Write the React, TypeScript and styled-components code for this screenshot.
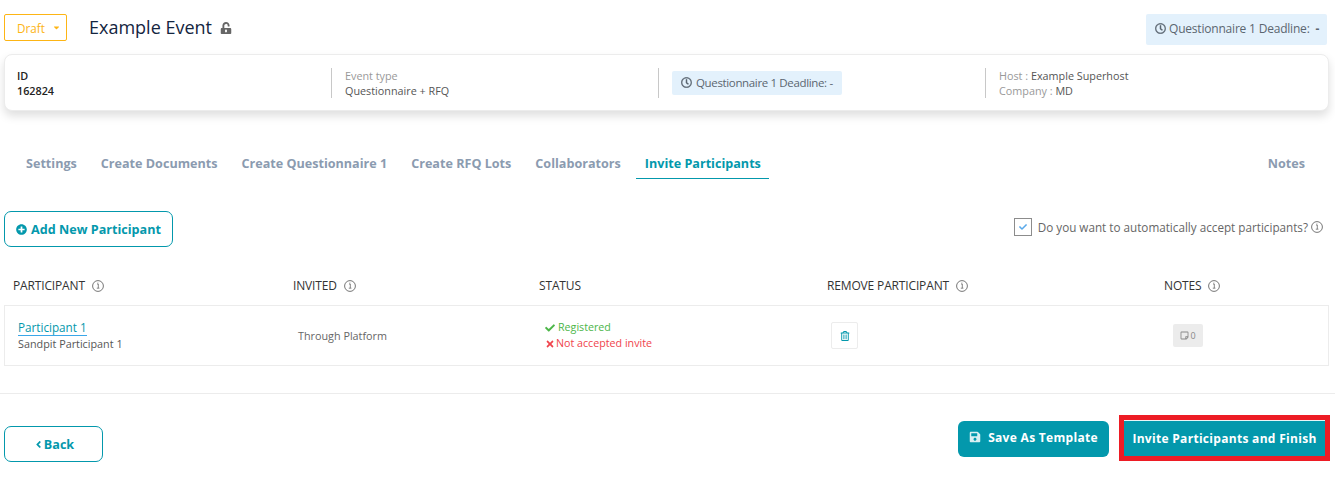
import styled, { createGlobalStyle } from 'styled-components';
import {
  FaAngleLeft,
  FaCaretDown,
  FaCheck,
  FaPlusCircle,
  FaRegClock,
  FaRegStickyNote,
  FaRegTrashAlt,
  FaSave,
  FaTimes,
  FaUnlockAlt
} from 'react-icons/fa';

const TEAL = '#0398ac';

const GlobalStyle = createGlobalStyle`
  html, body {
    margin: 0;
    padding: 0;
    background: #fff;
    font-family: "Open Sans", "Liberation Sans", sans-serif;
    color: #555;
    overflow: hidden;
  }
  * { box-sizing: border-box; }
`;

const Page = styled.div`
  width: 1335px;
  height: 477px;
  padding-top: 14px;
`;

const Header = styled.div`
  display: flex;
  align-items: flex-start;
  height: 31px;
  padding: 0 8px 0 4px;
`;

const StatusButton = styled.div`
  width: 63px;
  height: 27px;
  display: flex;
  align-items: center;
  gap: 7px;
  padding-left: 12px;
  border: 1px solid #fdb515;
  border-radius: 2px;
  color: #fdb515;
  font-size: 11.7px;
  svg { font-size: 9px; }
`;

const EventTitle = styled.div`
  display: flex;
  align-items: center;
  gap: 8px;
  height: 25px;
  margin-left: 22px;
  font-size: 18px;
  color: #14253f;
  svg { font-size: 12px; color: #666; margin-top: 2px; }
`;

const DeadlineChip = styled.div<{ $inCard?: boolean }>`
  display: flex;
  align-items: center;
  background: #e3f1fc;
  border-radius: 2px;
  color: #5b6670;
  ${props => props.$inCard ? `
    width: 170px;
    height: 24px;
    padding-left: 9px;
    gap: 4px;
    font-size: 11.5px;
    letter-spacing: -0.35px;
  ` : `
    width: 181px;
    height: 31px;
    padding: 0 0 2px 9px;
    gap: 3px;
    margin-left: auto;
    font-size: 12px;
    letter-spacing: -0.2px;
  `}
  svg { font-size: 11px; flex: none; stroke: currentColor; stroke-width: 12px; }
  b { font-weight: 700; margin-left: 3px; }
`;

const InfoCard = styled.div`
  display: grid;
  grid-template-columns: 326px repeat(3, 327px);
  align-items: center;
  width: 1325px;
  height: 57px;
  margin: 9px 0 0 4px;
  border: 1px solid #ececec;
  border-radius: 8px;
  background: #fff;
  box-shadow: 0 5px 10px rgba(0, 0, 0, 0.13);
`;

const InfoCell = styled.div<{ $first?: boolean }>`
  height: 30px;
  padding-left: 13px;
  display: flex;
  flex-direction: column;
  justify-content: center;
  font-size: 10.8px;
  line-height: 15px;
  color: #555;
  ${props => !props.$first && `border-left: 1px solid #c8c8c8;`}
  ${props => props.$first && `font-weight: 600; color: #222; padding-left: 12px;`}
`;

const Muted = styled.span`
  color: #999;
`;

const Tabs = styled.div`
  display: flex;
  align-items: flex-start;
  height: 40px;
  margin-top: 32px;
  padding: 0 30px 0 17px;
`;

const Tab = styled.div<{ $active?: boolean; $right?: boolean }>`
  height: 36px;
  padding: 12px 9px 0;
  margin-right: 6px;
  font-size: 12.6px;
  font-weight: 700;
  line-height: 18px;
  white-space: nowrap;
  color: ${props => (props.$active ? TEAL : '#8b9bb0')};
  ${props => props.$active && `border-bottom: 1px solid ${TEAL}; padding-right: 8px;`}
  ${props => props.$right && `margin: 0 0 0 auto; padding-right: 0;`}
`;

const ActionRow = styled.div`
  display: flex;
  align-items: flex-start;
  justify-content: space-between;
  height: 36px;
  margin-top: 28px;
  padding: 0 12px 0 4px;
`;

const OutlineButton = styled.div<{ $width: number; $gap: number }>`
  display: flex;
  align-items: center;
  justify-content: center;
  gap: ${props => props.$gap}px;
  width: ${props => props.$width}px;
  height: 36px;
  border: 1px solid ${TEAL};
  border-radius: 7px;
  color: ${TEAL};
  font-size: 12.6px;
  font-weight: 700;
  svg { font-size: 11px; }
`;

const AcceptLabel = styled.label`
  display: flex;
  align-items: center;
  gap: 6px;
  height: 18px;
  margin-top: 7px;
  font-size: 11.7px;
  color: #666;
`;

const CheckBox = styled.span`
  width: 18px;
  height: 18px;
  display: flex;
  align-items: center;
  justify-content: center;
  border: 1px solid #8c8c8c;
  color: #5aa9ea;
  svg { font-size: 8px; }
`;

const AcceptInfo = styled.span`
  display: flex;
  margin-left: -3px;
`;

const Columns = styled.div`
  display: grid;
  grid-template-columns: 280px 246px 288px 337px 1fr;
`;

const TableHead = styled(Columns)`
  height: 39px;
  margin-top: 19px;
  padding-left: 13px;
  align-items: center;
`;

const HeadCell = styled.div`
  display: flex;
  align-items: center;
  gap: 7px;
  font-size: 12px;
  letter-spacing: -0.15px;
  color: #333;
  svg { margin-top: 1px; }
`;

const Row = styled(Columns)`
  width: 1325px;
  height: 61px;
  margin-left: 4px;
  padding-left: 9px;
  border: 1px solid #ececec;
  align-items: center;
`;

const NameCell = styled.div`
  display: flex;
  flex-direction: column;
  align-items: flex-start;
  padding-left: 4px;
  font-size: 10.8px;
  line-height: 15px;
  color: #555;
`;

const NameLink = styled.a`
  font-size: 11.7px;
  line-height: 15px;
  color: ${TEAL};
  border-bottom: 1px solid #3aa7e8;
`;

const PlainCell = styled.div`
  padding-left: 4px;
  font-size: 10.8px;
  color: #666;
`;

const StatusCell = styled.div`
  display: flex;
  flex-direction: column;
  gap: 1px;
  padding-left: 5px;
  font-size: 10.7px;
  line-height: 15px;
`;

const StatusLine = styled.div<{ $color: string; $gap: number }>`
  display: flex;
  align-items: center;
  gap: ${props => props.$gap}px;
  color: ${props => props.$color};
  svg { font-size: 10px; }
`;

const TrashButton = styled.div`
  width: 27px;
  height: 27px;
  margin-left: 3px;
  display: flex;
  align-items: center;
  justify-content: center;
  border: 1px solid #ececec;
  border-radius: 2px;
  color: ${TEAL};
  font-size: 10px;
`;

const NoteBadge = styled.div`
  display: flex;
  align-items: center;
  justify-content: center;
  gap: 1px;
  width: 30px;
  height: 23px;
  margin-left: 8px;
  background: #ececec;
  border-radius: 2px;
  color: #888;
  font-size: 9px;
  svg { font-size: 9px; }
`;

const Divider = styled.hr`
  height: 1px;
  margin: 27px 0 0;
  border: 0;
  background: #ececec;
`;

const Footer = styled.div`
  display: flex;
  align-items: flex-start;
  margin-top: 21px;
  padding: 0 5px 0 4px;
`;

const BackSlot = styled.div`
  margin-top: 11px;
  margin-right: auto;
`;

const SaveButton = styled.div`
  display: flex;
  align-items: center;
  justify-content: center;
  gap: 7px;
  width: 151px;
  height: 36px;
  padding-bottom: 4px;
  margin-top: 6px;
  margin-right: 10px;
  background: ${TEAL};
  border-radius: 6px;
  color: #fff;
  font-size: 12px;
  font-weight: 700;
  letter-spacing: 0.3px;
  svg { font-size: 12px; opacity: 0.85; }
`;

const FinishButton = styled.div`
  display: flex;
  align-items: center;
  justify-content: center;
  width: 211px;
  height: 46px;
  background: ${TEAL};
  border: 5px solid #ed1c24;
  box-shadow: inset 0 1px 0 #e8f5f7;
  color: #fff;
  font-size: 12px;
  font-weight: 700;
  letter-spacing: 0.3px;
`;

const InfoIcon = () => (
  <svg width="12" height="12" viewBox="0 0 12 12" fill="none" style={{ flex: 'none' }}>
    <circle cx="6" cy="6" r="5.4" stroke="#666" strokeWidth="0.9" />
    <path d="M5 4h1.3v4M4.8 8.2h2.6M5.9 2.6v.7" stroke="#666" strokeWidth="0.8" />
  </svg>
);

const App = () => {
  return (
    <>
      <GlobalStyle />
      <Page>
        <Header>
          <StatusButton>
            Draft <FaCaretDown />
          </StatusButton>
          <EventTitle>
            Example Event <FaUnlockAlt />
          </EventTitle>
          <DeadlineChip>
            <FaRegClock /> Questionnaire 1 Deadline:<b>-</b>
          </DeadlineChip>
        </Header>

        <InfoCard>
          <InfoCell $first>
            <span>ID</span>
            <span>162824</span>
          </InfoCell>
          <InfoCell>
            <Muted>Event type</Muted>
            <span>Questionnaire + RFQ</span>
          </InfoCell>
          <InfoCell>
            <DeadlineChip $inCard>
              <FaRegClock /> Questionnaire 1 Deadline: -
            </DeadlineChip>
          </InfoCell>
          <InfoCell>
            <span><Muted>Host :</Muted> Example Superhost</span>
            <span><Muted>Company :</Muted> MD</span>
          </InfoCell>
        </InfoCard>

        <Tabs>
          <Tab>Settings</Tab>
          <Tab>Create Documents</Tab>
          <Tab>Create Questionnaire 1</Tab>
          <Tab>Create RFQ Lots</Tab>
          <Tab>Collaborators</Tab>
          <Tab $active>Invite Participants</Tab>
          <Tab $right>Notes</Tab>
        </Tabs>

        <ActionRow>
          <OutlineButton $width={169} $gap={4}>
            <FaPlusCircle /> Add New Participant
          </OutlineButton>
          <AcceptLabel>
            <CheckBox><FaCheck /></CheckBox>
            Do you want to automatically accept participants?
            <AcceptInfo><InfoIcon /></AcceptInfo>
          </AcceptLabel>
        </ActionRow>

        <TableHead>
          <HeadCell>PARTICIPANT <InfoIcon /></HeadCell>
          <HeadCell>INVITED <InfoIcon /></HeadCell>
          <HeadCell>STATUS</HeadCell>
          <HeadCell>REMOVE PARTICIPANT <InfoIcon /></HeadCell>
          <HeadCell>NOTES <InfoIcon /></HeadCell>
        </TableHead>

        <Row>
          <NameCell>
            <NameLink>Participant 1</NameLink>
            <span>Sandpit Participant 1</span>
          </NameCell>
          <PlainCell>Through Platform</PlainCell>
          <StatusCell>
            <StatusLine $color="#4cb648" $gap={3}><FaCheck /> Registered</StatusLine>
            <StatusLine $color="#f0444c" $gap={1}><FaTimes /> Not accepted invite</StatusLine>
          </StatusCell>
          <div><TrashButton><FaRegTrashAlt /></TrashButton></div>
          <div><NoteBadge><FaRegStickyNote /> 0</NoteBadge></div>
        </Row>

        <Divider />

        <Footer>
          <BackSlot>
            <OutlineButton $width={99} $gap={0}>
              <FaAngleLeft /> Back
            </OutlineButton>
          </BackSlot>
          <SaveButton><FaSave /> Save As Template</SaveButton>
          <FinishButton>Invite Participants and Finish</FinishButton>
        </Footer>
      </Page>
    </>
  );
};

export default App;
